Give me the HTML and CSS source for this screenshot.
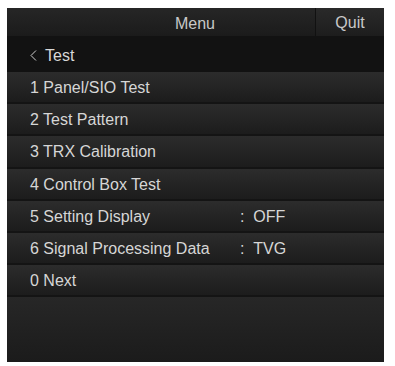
FILE: index.html
```html
<!DOCTYPE html>
<html lang="en">
  <head>
    <meta charset="UTF-8" />
    <meta name="viewport" content="width=device-width, initial-scale=1.0" />
    <title>Menu - Test</title>
    <link rel="stylesheet" href="styles.css">
  </head>
  <body>
    <main class="panel">
      <header class="titlebar">
        <span class="title">Menu</span>
        <button class="quit">Quit</button>
      </header>
      <div class="back">
        <svg class="chevron" width="7" height="11" viewBox="0 0 7 11">
          <path d="M6 0.5 L1 5.5 L6 10.5" fill="none" stroke="#cfcfcf" stroke-width="1" />
        </svg>
        <span>Test</span>
      </div>
      <ul class="menu">
        <li class="item">1 Panel/SIO Test</li>
        <li class="item">2 Test Pattern</li>
        <li class="item">3 TRX Calibration</li>
        <li class="item">4 Control Box Test</li>
        <li class="item">
          <span class="label">5 Setting Display</span>
          <span class="value">:&nbsp;&nbsp;OFF</span>
        </li>
        <li class="item">
          <span class="label">6 Signal Processing Data</span>
          <span class="value">:&nbsp;&nbsp;TVG</span>
        </li>
        <li class="item">0 Next</li>
      </ul>
      <div class="filler"></div>
    </main>
  </body>
</html>
```

FILE: styles.css
```css
*,
*::before,
*::after {
  box-sizing: border-box;
}

body {
  margin: 0;
  padding: 8px 11px 4px 7px;
  background: #fff;
  font-family: "Liberation Sans", Arial, sans-serif;
}

.panel {
  display: flex;
  flex-direction: column;
  height: 354px;
  background: #151515;
  color: #d6d6d6;
  font-size: 16px;
}

.titlebar {
  display: flex;
  height: 28px;
  background: linear-gradient(#262626, #1b1b1b);
}

.title {
  flex: 1;
  text-align: center;
  padding: 2px 0 0 68px;
  line-height: 28px;
  color: #c8c8c8;
}

.quit {
  width: 69px;
  border: 0;
  border-left: 1px solid #111;
  background: linear-gradient(#2a2a2a, #1d1d1d);
  color: #c8c8c8;
  font: inherit;
  padding: 2px 0 0;
}

.back {
  display: flex;
  align-items: center;
  gap: 8px;
  height: 36px;
  padding: 3px 0 0 23px;
  background: #121212;
  color: #d8d8d8;
}

.chevron {
  flex: none;
}

.menu {
  list-style: none;
  margin: 0;
  padding: 0;
}

.item {
  display: flex;
  align-items: center;
  height: 32.2px;
  padding: 2px 0 0 23px;
  border-bottom: 2px solid #141414;
  background: linear-gradient(#2c2c2c, #1c1c1c);
}

.label {
  width: 210px;
}

.filler {
  flex: 1;
  background: linear-gradient(#272727, #1b1b1b);
}
```
